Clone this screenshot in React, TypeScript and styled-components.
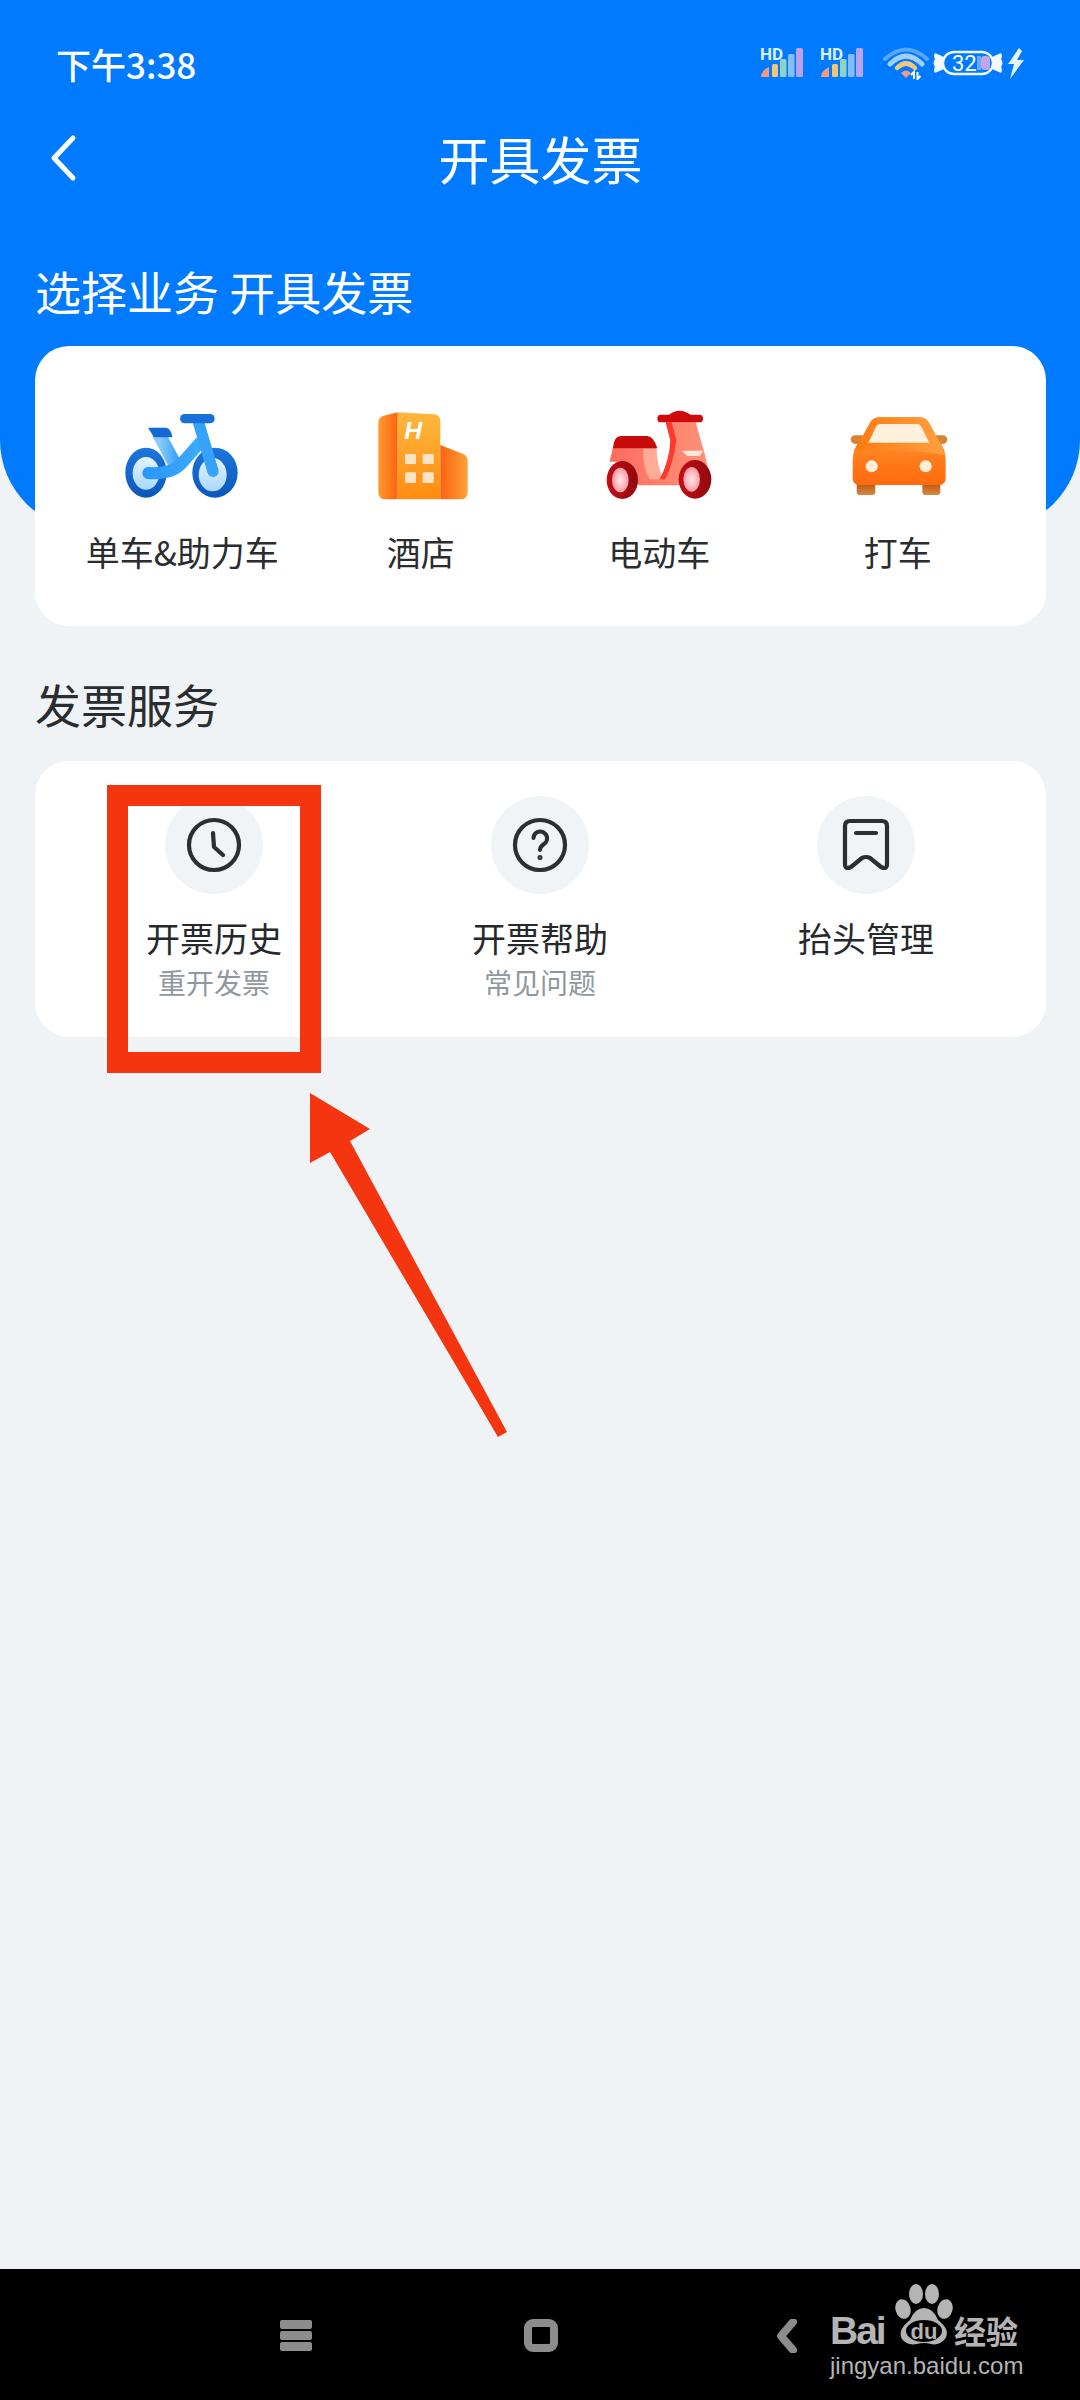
import styled, { createGlobalStyle } from 'styled-components';

const GlobalStyle = createGlobalStyle`
  html, body {
    margin: 0;
    padding: 0;
    background: #eff3f6;
  }
  * {
    box-sizing: border-box;
  }
`;

const CJK = `"Noto Sans CJK SC", "Noto Sans", sans-serif`;

const SignalIcon = () => (
  <svg width="44" height="44" viewBox="0 -6 44 44">
    <text x="0" y="13" fontFamily="Roboto, sans-serif" fontWeight="700" fontSize="17" fill="#dff0ff">
      HD
    </text>
    <path d="M1 30 Q1 24 9 20 V30 Z" fill="#f59a80" />
    <rect x="12" y="17" width="6" height="13" rx="1.500" fill="#f5c572" />
    <rect x="20" y="12" width="6.500" height="18" rx="1.500" fill="#8fd3c4" />
    <rect x="28" y="7" width="6.500" height="23" rx="1.500" fill="#86bdf5" />
    <rect x="36" y="1" width="7" height="29" rx="1.500" fill="#bba0ee" />
  </svg>
);

const WifiIcon = () => (
  <svg width="46" height="34" viewBox="0 0 46 34">
    <path d="M2 13 Q23 -6 44 13" fill="none" stroke="#5aa6fb" strokeWidth="4" strokeLinecap="round" />
    <path d="M7 18 Q23 2 39 18" fill="none" stroke="#a5cffb" strokeWidth="5" strokeLinecap="round" />
    <path d="M14 22 Q23 13 32 22" fill="none" stroke="#f5c67a" strokeWidth="4.500" strokeLinecap="round" />
    <path d="M18 27 Q23 22 28 27 L23 32 Z" fill="#f59a80" />
    <path d="M31 33 V26 L28 29 M34.500 26 V33 L37.500 30" fill="none" stroke="#fff" strokeWidth="2" />
  </svg>
);

const BatteryIcon = () => (
  <svg width="72" height="32" viewBox="0 -3 72 32">
    <path d="M12 7 L3 3 Q1 6 3 9 Q0 13 3 17 Q1 20 3 23 L12 19 Z" fill="#f2f8ff" />
    <path d="M60 7 L69 3 Q71 6 69 9 Q72 13 69 17 Q71 20 69 23 L60 19 Z" fill="#f2f8ff" />
    <rect x="11" y="2" width="50" height="22" rx="11" fill="#007aff" stroke="#f2f8ff" strokeWidth="2.400" />
    <rect x="49" y="6" width="9" height="14" rx="3.500" fill="#c2a5ec" />
    <rect x="45" y="6" width="4" height="14" fill="#6fa9f3" />
    <text x="20" y="21" fontFamily="Roboto, sans-serif" fontSize="22" fill="#fff">
      32
    </text>
  </svg>
);

const BoltIcon = () => (
  <svg width="18" height="31" viewBox="0 0 18 31">
    <path d="M12 0 L1 16 H7 L3 31 L17 12 H10 L15 3 Z" fill="#e6f3ff" />
  </svg>
);

const BackIcon = () => (
  <svg width="30" height="48" viewBox="0 0 30 48">
    <path d="M25 4 L6 24 L25 44" fill="none" stroke="#fff" strokeWidth="5" strokeLinecap="round" strokeLinejoin="round" />
  </svg>
);

const BikeIcon = () => (
  <svg width="160" height="120" viewBox="126 42 480 360">
    <defs>
      <linearGradient id="bikeFrame" x1="0" y1="0" x2="1" y2="0">
        <stop offset="0" stopColor="#2a97fb" />
        <stop offset="1" stopColor="#3caafd" />
      </linearGradient>
      <linearGradient id="bikeTube" x1="0" y1="0" x2="1" y2="0">
        <stop offset="0" stopColor="#8ccbfc" />
        <stop offset="1" stopColor="#3fa6fb" />
      </linearGradient>
      <linearGradient id="bikeHub" x1="0" y1="1" x2="0" y2="0">
        <stop offset="0" stopColor="#a9d8fe" />
        <stop offset="1" stopColor="#e4f3ff" />
      </linearGradient>
      <linearGradient id="bikeTyre" x1="0" y1="0" x2="0" y2="1">
        <stop offset="0" stopColor="#1c76dc" />
        <stop offset="1" stopColor="#0b57bb" />
      </linearGradient>
    </defs>
    <ellipse cx="258" cy="278" rx="62" ry="75" fill="url(#bikeTyre)" />
    <ellipse cx="258" cy="280" rx="40" ry="49" fill="url(#bikeHub)" />
    <ellipse cx="465" cy="278" rx="68" ry="75" fill="url(#bikeTyre)" />
    <ellipse cx="458" cy="284" rx="42" ry="50" fill="url(#bikeHub)" />
    <path d="M298 165 L348 258" stroke="url(#bikeTube)" strokeWidth="40" strokeLinecap="round" />
    <path d="M265 279 Q340 284 370 245 L420 188" fill="none" stroke="url(#bikeFrame)" strokeWidth="36" strokeLinecap="round" />
    <path d="M414 122 L459 274" stroke="#35a2fb" strokeWidth="34" strokeLinecap="round" />
    <path d="M264 143 H320 Q334 148 337 172 H282 Z" fill="#1567d2" />
    <rect x="360" y="102" width="104" height="28" rx="14" fill="#1a70da" />
  </svg>
);

const HotelIcon = () => (
  <svg width="160" height="120" viewBox="840 42 480 360">
    <defs>
      <linearGradient id="hotelFront" x1="0" y1="0" x2="0" y2="1">
        <stop offset="0" stopColor="#ffb83d" />
        <stop offset="1" stopColor="#ff8c12" />
      </linearGradient>
      <linearGradient id="hotelSide" x1="0" y1="0" x2="1" y2="0">
        <stop offset="0" stopColor="#ff9a2e" />
        <stop offset="1" stopColor="#fb6410" />
      </linearGradient>
      <linearGradient id="hotelWing" x1="0" y1="0" x2="1" y2="0">
        <stop offset="0" stopColor="#fb6410" />
        <stop offset="1" stopColor="#ffa038" />
      </linearGradient>
    </defs>
    <path d="M952 128 Q952 112 968 107 L1010 97 V358 H975 Q952 358 952 335 Z" fill="url(#hotelSide)" />
    <path d="M1010 97 L1118 103 Q1138 104 1138 124 V358 H1010 Z" fill="url(#hotelFront)" />
    <path d="M1138 195 L1205 221 Q1220 227 1220 243 V335 Q1220 358 1197 358 H1138 Z" fill="url(#hotelWing)" />
    <text x="1030" y="178" fontFamily="Liberation Sans, sans-serif" fontWeight="700" fontStyle="italic" fontSize="74" fill="#fff">
      H
    </text>
    <rect x="1032" y="222" width="33" height="30" rx="3" fill="#fde3c6" />
    <rect x="1085" y="222" width="33" height="30" rx="3" fill="#fde3c6" />
    <rect x="1032" y="277" width="33" height="32" rx="3" fill="#fde3c6" />
    <rect x="1085" y="277" width="33" height="32" rx="3" fill="#fde3c6" />
  </svg>
);

const ScooterIcon = () => (
  <svg width="160" height="120" viewBox="120 42 480 360">
    <defs>
      <linearGradient id="scooterBody" x1="0" y1="0" x2="1" y2="0">
        <stop offset="0" stopColor="#ff6b5c" />
        <stop offset="1" stopColor="#ff9278" />
      </linearGradient>
      <radialGradient id="scooterHub">
        <stop offset="0" stopColor="#ffe8ea" />
        <stop offset="1" stopColor="#ff9aa6" />
      </radialGradient>
      <linearGradient id="scooterTyre" x1="0" y1="0" x2="1" y2="0">
        <stop offset="0" stopColor="#c40c12" />
        <stop offset="1" stopColor="#8f0a0e" />
      </linearGradient>
    </defs>
    <path d="M380 127 H470 L498 225 L508 270 L420 316 H300 Q262 290 245 245 H212 L222 200 H312 L352 205 Q352 250 368 290 Q392 262 396 190 Z" fill="url(#scooterBody)" />
    <path d="M312 205 H352 Q352 250 372 298 H332 Q312 270 312 205 Z" fill="#ffab95" />
    <path d="M380 127 H398 L412 180 Q404 250 378 298 H362 Q392 240 394 180 Z" fill="#ff3a2c" />
    <path d="M428 212 H492 L482 228 H445 Z" fill="#ffe9de" />
    <path d="M222 205 Q224 168 246 168 H325 Q345 170 355 205 Z" fill="#c80a0a" />
    <path d="M390 104 Q420 80 455 104 H482 Q492 104 492 116 Q492 127 482 127 H365 Q355 127 355 116 Q355 104 365 104 Z" fill="#cf0a0a" />
    <ellipse cx="250" cy="300" rx="47" ry="57" fill="url(#scooterTyre)" />
    <ellipse cx="244" cy="300" rx="25" ry="37" fill="url(#scooterHub)" />
    <ellipse cx="468" cy="298" rx="49" ry="58" fill="url(#scooterTyre)" />
    <ellipse cx="458" cy="298" rx="25" ry="37" fill="url(#scooterHub)" />
  </svg>
);

const CarIcon = () => (
  <svg width="160" height="120" viewBox="834 42 480 360">
    <defs>
      <linearGradient id="carBody" x1="0" y1="0" x2="0" y2="1">
        <stop offset="0" stopColor="#ff9c33" />
        <stop offset="1" stopColor="#ff6a0d" />
      </linearGradient>
      <linearGradient id="carTop" x1="0" y1="0" x2="1" y2="0">
        <stop offset="0" stopColor="#ff7a12" />
        <stop offset="1" stopColor="#ffa040" />
      </linearGradient>
      <linearGradient id="carWheel" x1="0" y1="0" x2="0" y2="1">
        <stop offset="0" stopColor="#b4590f" />
        <stop offset="1" stopColor="#d98a45" />
      </linearGradient>
    </defs>
    <path d="M950 310 H1006 V335 Q1006 345 996 345 H960 Q950 345 950 335 Z" fill="url(#carWheel)" />
    <path d="M1147 310 H1201 V335 Q1201 345 1191 345 H1157 Q1147 345 1147 335 Z" fill="url(#carWheel)" />
    <path d="M968 166 H944 Q932 168 932 179 Q934 190 946 192 L968 190 Z" fill="#d9822f" />
    <path d="M1186 166 H1210 Q1222 168 1222 179 Q1220 190 1208 192 L1186 190 Z" fill="#d9822f" />
    <path d="M938 240 Q938 205 962 180 L990 128 Q1000 112 1020 112 H1140 Q1158 112 1168 130 L1195 180 Q1217 205 1217 240 V295 Q1217 315 1197 315 H958 Q938 315 938 295 Z" fill="url(#carBody)" />
    <path d="M942 212 Q950 195 962 180 L990 128 Q1000 112 1020 112 H1140 Q1158 112 1168 130 L1195 180 Q1208 195 1214 224 Q1075 205 942 212 Z" fill="url(#carTop)" />
    <path d="M985 188 L1008 140 Q1012 132 1020 132 H1132 Q1140 132 1144 140 L1168 188 Z" fill="#fdf0dc" />
    <circle cx="995" cy="259" r="18" fill="#fdeed8" />
    <circle cx="1157" cy="259" r="18" fill="#fdeed8" />
  </svg>
);

const ClockIcon = () => (
  <ServiceSvg viewBox="0 0 60 60">
    <circle cx="30" cy="30" r="25" />
    <path d="M29 18 L30 32 L39 40" />
  </ServiceSvg>
);

const HelpIcon = () => (
  <ServiceSvg viewBox="0 0 60 60">
    <circle cx="30" cy="30" r="25" />
    <path d="M23.500 23 a6.800 6.800 0 1 1 10.500 6 c-2.600 1.800 -4 3 -4 6" strokeWidth="4" />
    <circle cx="30" cy="42.500" r="1" strokeWidth="3" />
  </ServiceSvg>
);

const BookmarkIcon = () => (
  <ServiceSvg viewBox="0 0 60 60">
    <path d="M9 11 Q9 6 14 6 H46 Q51 6 51 11 V49 Q51 55 45 52 L34 43 Q30 41 26 43 L15 52 Q9 55 9 49 Z" />
    <path d="M20 18 H40" />
  </ServiceSvg>
);

const BUSINESS = [
  { label: '单车&助力车', icon: <BikeIcon /> },
  { label: '酒店', icon: <HotelIcon /> },
  { label: '电动车', icon: <ScooterIcon /> },
  { label: '打车', icon: <CarIcon /> },
];

const SERVICES = [
  { label: '开票历史', sub: '重开发票', icon: <ClockIcon /> },
  { label: '开票帮助', sub: '常见问题', icon: <HelpIcon /> },
  { label: '抬头管理', sub: '', icon: <BookmarkIcon /> },
];

function App() {
  return (
    <Page>
      <GlobalStyle />
      <Main>
        <StatusBar>
          <Time>下午3:38</Time>
          <StatusIcons>
            <SignalGroup>
              <SignalIcon />
              <SignalIcon />
            </SignalGroup>
            <PowerGroup>
              <WifiIcon />
              <BatteryIcon />
              <BoltIcon />
            </PowerGroup>
          </StatusIcons>
        </StatusBar>

        <NavBar>
          <BackIcon />
          <NavTitle>开具发票</NavTitle>
        </NavBar>

        <SectionTitle $light>选择业务 开具发票</SectionTitle>
        <BusinessCard>
          {BUSINESS.map((item) => (
            <BusinessItem key={item.label}>
              {item.icon}
              <ItemLabel>{item.label}</ItemLabel>
            </BusinessItem>
          ))}
        </BusinessCard>

        <SectionTitle $gap>发票服务</SectionTitle>
        <ServiceCard>
          {SERVICES.map((item) => (
            <ServiceItem key={item.label}>
              <IconCircle>{item.icon}</IconCircle>
              <ServiceLabel>{item.label}</ServiceLabel>
              {item.sub && <ServiceSub>{item.sub}</ServiceSub>}
            </ServiceItem>
          ))}
        </ServiceCard>
      </Main>

      <BottomBar>
        <MenuKey>
          <span />
          <span />
          <span />
        </MenuKey>
        <HomeKey />
        <BackKey viewBox="0 0 22 34">
          <path d="M17 3 L5 17 L17 31" />
        </BackKey>
      </BottomBar>

      <Watermark>
        <LogoRow>
          <LogoBai>Bai</LogoBai>
          <svg width="58" height="62" viewBox="0 0 58 62">
            <ellipse cx="8" cy="25" rx="7.500" ry="10" fill="#b4b4b4" transform="rotate(-15 8 25)" />
            <ellipse cx="21" cy="10" rx="7" ry="10" fill="#b4b4b4" />
            <ellipse cx="37" cy="10" rx="7" ry="10" fill="#b4b4b4" />
            <ellipse cx="50" cy="25" rx="7.500" ry="10" fill="#b4b4b4" transform="rotate(15 50 25)" />
            <path d="M29 24 Q38 24 43 36 Q56 46 50 55 Q44 62 36 60 Q29 58 22 60 Q12 62 7 55 Q2 46 15 36 Q20 24 29 24 Z" fill="#b4b4b4" />
            <ellipse cx="29" cy="47" rx="18" ry="11" fill="#000" />
            <text x="29" y="55" textAnchor="middle" fontFamily="Liberation Sans, sans-serif" fontWeight="700" fontSize="22" fill="#b4b4b4">
              du
            </text>
          </svg>
          <LogoCn>经验</LogoCn>
        </LogoRow>
        <LogoUrl>jingyan.baidu.com</LogoUrl>
      </Watermark>

      <Highlight />
      <Arrow viewBox="300 1085 220 360">
        <polygon points="310,1093 370,1129 350,1141 507,1432 498,1437 330,1152 310,1163" />
      </Arrow>
    </Page>
  );
}

export default App;

const Page = styled.div`
  position: relative;
  width: 1080px;
  height: 2400px;
  display: flex;
  flex-direction: column;
  overflow: hidden;
  background: #eff3f6;
  font-family: ${CJK};
`;

const Main = styled.main`
  position: relative;
  flex: 1;
  padding: 0 34px 0 35px;

  &::before {
    content: '';
    position: absolute;
    top: 0;
    left: 0;
    width: 100%;
    height: 530px;
    background: #007aff;
    border-radius: 0 0 90px 90px;
  }

  > * {
    position: relative;
  }
`;

const StatusBar = styled.div`
  height: 126px;
  margin: 0 21px;
  display: flex;
  align-items: center;
  justify-content: space-between;
`;

const Time = styled.span`
  font-size: 35px;
  font-weight: 500;
  color: #fff;
`;

const StatusIcons = styled.div`
  display: flex;
  align-items: center;
  gap: 19px;
`;

const SignalGroup = styled.div`
  display: flex;
  gap: 16px;
`;

const PowerGroup = styled.div`
  display: flex;
  align-items: center;
  gap: 3px;
`;

const NavBar = styled.div`
  height: 64px;
  margin-left: 13px;
  display: grid;
  grid-template-columns: 30px 1fr 30px;
  grid-template-rows: 64px;
  align-items: center;

  svg {
    grid-column: 1;
    grid-row: 1;
  }
`;

const NavTitle = styled.h1`
  grid-column: 2;
  grid-row: 1;
  margin: 0 13px 0 0;
  text-align: center;
  font-size: 51px;
  line-height: 64px;
  font-weight: 400;
  color: #fff;
`;

const SectionTitle = styled.h2<{ $light?: boolean; $gap?: boolean }>`
  margin: ${(props) => (props.$gap ? '47px' : '70px')} 0 0;
  font-size: 46px;
  line-height: 60px;
  font-weight: 400;
  color: ${(props) => (props.$light ? '#fff' : '#2a2d30')};
`;

const BusinessCard = styled.section`
  height: 280px;
  margin-top: 26px;
  padding: 48px 29px 0 28px;
  display: grid;
  grid-template-columns: repeat(4, 1fr);
  background: #fff;
  border-radius: 34px;
`;

const BusinessItem = styled.div`
  display: flex;
  flex-direction: column;
  align-items: center;
`;

const ItemLabel = styled.span`
  margin-top: 13px;
  font-size: 34px;
  line-height: 50px;
  color: #2a2d30;
  white-space: nowrap;
`;

const ServiceCard = styled.section`
  height: 276px;
  margin-top: 28px;
  padding: 35px 17px 0 16px;
  display: grid;
  grid-template-columns: repeat(3, 1fr);
  background: #fff;
  border-radius: 34px;
`;

const ServiceItem = styled.div`
  display: flex;
  flex-direction: column;
  align-items: center;
`;

const IconCircle = styled.div`
  width: 98px;
  height: 98px;
  display: flex;
  align-items: center;
  justify-content: center;
  background: #f0f4f6;
  border-radius: 50%;
`;

const ServiceSvg = styled.svg`
  width: 60px;
  height: 60px;
  fill: none;
  stroke: #2a2f33;
  stroke-width: 4.2;
  stroke-linecap: round;
  stroke-linejoin: round;
`;

const ServiceLabel = styled.span`
  margin-top: 19px;
  font-size: 34px;
  line-height: 50px;
  color: #26292c;
`;

const ServiceSub = styled.span`
  font-size: 28px;
  line-height: 38px;
  color: #8f979f;
`;

const BottomBar = styled.nav`
  height: 131px;
  padding: 50px 282px 0 280px;
  display: flex;
  align-items: flex-start;
  justify-content: space-between;
  background: #000;
`;

const MenuKey = styled.div`
  width: 32px;
  display: flex;
  flex-direction: column;
  gap: 2px;
  margin-top: 1px;

  span {
    height: 9px;
    background: #8c8c8c;
    border-radius: 2px;
  }
`;

const HomeKey = styled.div`
  width: 34px;
  height: 33px;
  margin-right: 6px;
  border: 8px solid #8c8c8c;
  border-radius: 9px;
`;

const BackKey = styled.svg`
  width: 22px;
  height: 34px;
  fill: none;
  stroke: #8c8c8c;
  stroke-width: 8;
  stroke-linecap: round;
  stroke-linejoin: round;
`;

const Watermark = styled.div`
  position: absolute;
  left: 830px;
  top: 2284px;
  width: 194px;
  color: #b4b4b4;
`;

const LogoRow = styled.div`
  height: 62px;
  display: flex;
  align-items: flex-end;
`;

const LogoBai = styled.span`
  width: 65px;
  font-family: "Liberation Sans", sans-serif;
  font-size: 39px;
  line-height: 30px;
  letter-spacing: -2px;
  font-weight: 700;
`;

const LogoCn = styled.span`
  margin-left: 1px;
  font-size: 32px;
  line-height: 32px;
  font-weight: 700;
  white-space: nowrap;
`;

const LogoUrl = styled.div`
  margin-top: 6px;
  font-family: "Liberation Sans", sans-serif;
  font-size: 24px;
  line-height: 28px;
  white-space: nowrap;
`;

const Highlight = styled.div`
  position: absolute;
  left: 107px;
  top: 785px;
  width: 214px;
  height: 288px;
  border: 21px solid #f5350f;
`;

const Arrow = styled.svg`
  position: absolute;
  left: 300px;
  top: 1085px;
  width: 220px;
  height: 360px;
  fill: #f5350f;
`;
